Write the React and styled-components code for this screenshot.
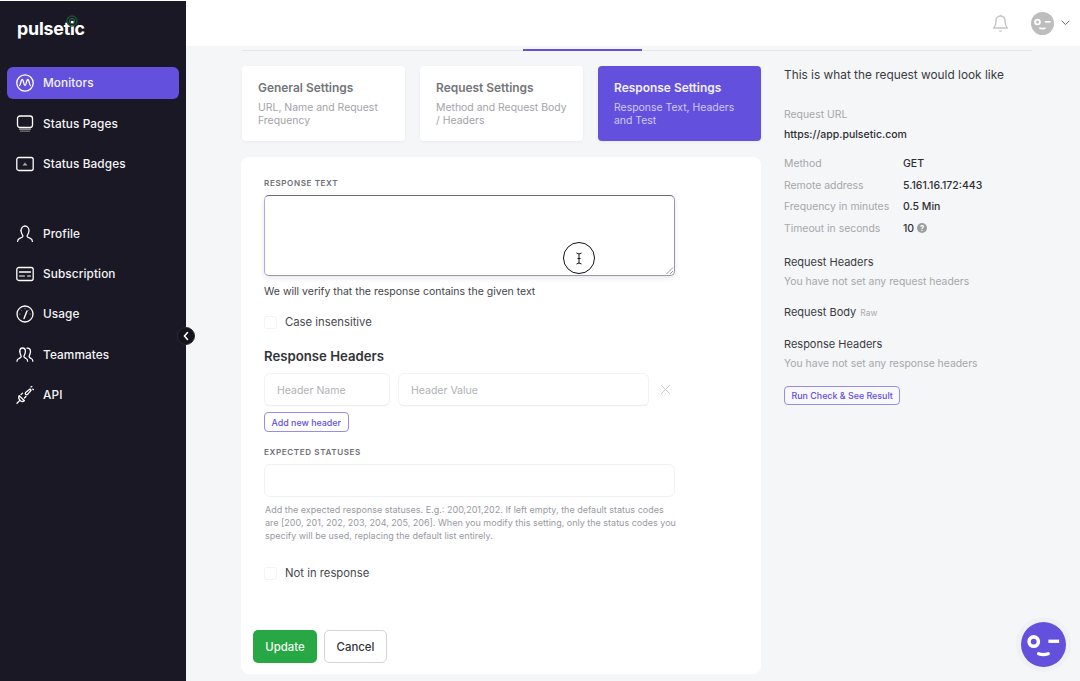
import React from "react";
import styled, { createGlobalStyle } from "styled-components";

const Global = createGlobalStyle`
  html, body { margin: 0; padding: 0; height: 100%; background: #f5f6f8; }
  body { font-family: Inter, "Liberation Sans", sans-serif; -webkit-font-smoothing: antialiased; }
  * { box-sizing: border-box; }
`;

const Shell = styled.div`
  display: flex; width: 1080px; height: 681px; overflow: hidden; position: relative; background: #f5f6f8;
`;
const Sidebar = styled.aside`
  width: 186px; flex: none; background: #1a1824; position: relative; padding: 1px 7px 0; border-top: 1px solid #fff;
`;
const Logo = styled.div`
  position: relative; width: fit-content; margin: 16px 0 0 10px; height: 22px;
  color: #fff; font-size: 17.8px; font-weight: 700; line-height: 22px; letter-spacing: -0.2px;
`;
const LogoDot = styled.svg`
  position: absolute; left: 49px; top: -3px; width: 12px; height: 12px;
`;
const NavGroup = styled.nav`
  display: flex; flex-direction: column; gap: 8px; margin-top: ${p => p.$top}px;
`;
const NavItem = styled.div`
  display: flex; align-items: center; gap: 9px; height: 32.3px; padding-left: 9px; padding-top: 0.6px; border-radius: 6px;
  background: ${p => (p.$active ? "#6350dc" : "transparent")};
  color: #f4f4f6; font-size: 11.8px; font-weight: 500; letter-spacing: 0.1px;
  svg { width: 18px; height: 18px; flex: none; }
`;
const Collapse = styled.button`
  position: absolute; left: 177px; top: 326px; width: 18px; height: 18px; padding: 0; border: 1px solid #2b2937;
  border-radius: 50%; background: #14131b; display: flex; align-items: center; justify-content: center;
`;
const Main = styled.div`
  flex: 1; display: flex; flex-direction: column; min-width: 0;
`;
const Topbar = styled.header`
  height: 46px; flex: none; background: #fff; display: flex; align-items: center; justify-content: flex-end;
  gap: 13px; padding: 0 10px 0 0;
`;
const Avatar = styled.svg`
  width: 23px; height: 23px;
`;
const UserBox = styled.div`
  display: flex; align-items: center; gap: 7px; margin-left: 9px;
`;
const Content = styled.div`
  flex: 1; padding: 0 48px 0 56px; min-height: 0;
`;
const StepLine = styled.div`
  height: 5px; border-bottom: 1px solid #e4e6ec; position: relative;
`;
const StepMark = styled.div`
  position: absolute; left: 281px; top: 3px; width: 119px; height: 2px; background: #6350dc;
`;
const Columns = styled.div`
  display: flex; gap: 23px; margin-top: 15px;
`;
const Left = styled.div`
  width: 519px; flex: none;
`;
const Tabs = styled.div`
  display: grid; grid-template-columns: repeat(3, 163px); gap: 15px;
`;
const Tab = styled.div`
  height: 75px; border-radius: 4px; padding: 14px 15px 0 16px;
  background: ${p => (p.$active ? "#6350dc" : "#fff")};
  box-shadow: 0 1px 3px rgba(30, 30, 60, 0.06);
`;
const TabTitle = styled.div`
  font-size: 11.95px; font-weight: 600; line-height: 15px; margin-bottom: 6px;
  color: ${p => (p.$active ? "#f2f0ff" : "#74757a")};
`;
const TabText = styled.div`
  font-size: 10.45px; line-height: 13px;
  color: ${p => (p.$active ? "#cfc8f7" : "#a3a4a8")};
`;
const Card = styled.section`
  position: relative; margin: 16px 0 0 -1px; width: 520px; height: 517px; background: #fff; border-radius: 8px; padding: 21px 12px 0 23px;
`;
const FieldLabel = styled.div`
  font-size: 8.1px; font-weight: 600; letter-spacing: 0.6px; color: #6f7076; line-height: 10px;
  margin-top: ${p => p.$top || 0}px;
`;
const TextArea = styled.div`
  position: relative; width: 411px; height: 81px; margin-top: 7px;
  border: 1px solid #9a98a8; border-top-color: #6b6b70; border-left-color: #b1a9ee;
  border-radius: 5px; box-shadow: 0 2px 5px rgba(50, 50, 80, 0.12); background: #fff;
`;
const Resize = styled.svg`
  position: absolute; right: 0; bottom: 0; width: 9px; height: 9px;
`;
const Cursor = styled.div`
  position: absolute; left: 322px; top: 85px; width: 32px; height: 32px; border: 1.2px solid #111; border-radius: 50%;
  display: flex; align-items: center; justify-content: center; background: #fff;
`;
const Verify = styled.p`
  margin: 9px 0 0; font-size: 10.5px; line-height: 13px; color: #44454a;
`;
const CheckRow = styled.label`
  display: flex; align-items: center; gap: 8px; margin-top: ${p => p.$top}px; color: #48494e; font-size: 11.3px; line-height: 14px;
`;
const Check = styled.span`
  width: 13px; height: 13px; border-radius: 3px; border: 1px solid #f3f3f5; background: #fff; flex: none;
`;
const SectionTitle = styled.h3`
  margin: 19px 0 0; font-size: 13.2px; font-weight: 600; line-height: 16px; color: #333438;
`;
const HeaderRow = styled.div`
  display: flex; align-items: center; gap: 8px; margin-top: 9px;
`;
const Input = styled.div`
  width: ${p => p.$w}px; height: 33px; border: 1px solid #f1f2f4; border-bottom-color: #eceef0; border-radius: 6px; background: #fff;
  padding: 1px 0 0 12px; display: flex; align-items: center; font-size: 10.5px; color: #b0b1b5; box-shadow: 0 1px 1px rgba(0, 0, 0, 0.02);
`;
const Close = styled.svg`
  width: 11px; height: 11px; margin-left: 3px;
`;
const OutlineBtn = styled.button`
  display: block; height: ${p => (p.$tint ? 19 : 20)}px; padding: 0 6.5px; border: 1px solid #9a8de8; border-radius: 4px;
  background: ${p => (p.$tint ? "#f8f8fc" : "#fff")};
  color: #6350dc; font-family: inherit; font-size: 8.9px; font-weight: 500; margin-top: ${p => p.$top}px;
`;
const Statuses = styled.div`
  width: 411px; height: 33px; margin-top: 7px; border: 1px solid #f0f1f3; border-radius: 6px; background: #fff;
`;
const Hint = styled.p`
  margin: 7px 0 0 1px; width: 414px; font-size: 9px; line-height: 12.8px; color: #999a9f;
`;
const Actions = styled.div`
  position: absolute; left: 12px; bottom: 11px; display: flex; gap: 7px;
`;
const Update = styled.button`
  width: 64px; height: 33px; border: 0; border-radius: 5px; background: #28a745; color: #f2fbf4; font-family: inherit; font-size: 11.4px; font-weight: 500;
`;
const Cancel = styled.button`
  width: 63px; height: 33px; border: 1px solid #d2d4d8; border-radius: 5px; background: #fff; color: #333438; font-family: inherit; font-size: 11.4px; font-weight: 500;
`;
const Side = styled.div`
  flex: 1; min-width: 0; color: #333438; padding-top: 1px;
`;
const SideTitle = styled.div`
  font-size: 11.85px; line-height: 16px; color: #3a3b40;
`;
const MutedLabel = styled.div`
  font-size: 10.4px; line-height: 13px; color: #a6a7ab; margin-top: ${p => p.$top || 0}px;
`;
const UrlText = styled.div`
  font-size: 10.5px; font-weight: 500; line-height: 13px; color: #2e2f33; margin-top: 7px;
`;
const Specs = styled.div`
  display: grid; grid-template-columns: 119px 1fr; row-gap: 8.4px; margin-top: 16.4px; align-items: center;
`;
const SpecValue = styled.div`
  font-size: 10.5px; font-weight: 500; line-height: 13px; color: #2e2f33; display: flex; align-items: center; gap: 3px;
`;
const SideHead = styled.div`
  font-size: 11px; line-height: 14px; color: #3a3b40; margin-top: ${p => p.$top}px;
`;
const Raw = styled.span`
  font-size: 8.4px; color: #aaabaf; margin-left: 1px;
`;
const Help = styled.span`
  width: 10px; height: 10px; border-radius: 50%; background: #9c9da1; color: #fff; font-size: 7.5px; font-weight: 700;
  display: inline-flex; align-items: center; justify-content: center;
`;
const Chat = styled.div`
  position: absolute; left: 1021px; top: 622px; width: 45px; height: 45px; border-radius: 50%; background: #6350dc;
  box-shadow: 0 0 0 5px rgba(225, 228, 235, 0.25);
`;

const stroke = { fill: "none", stroke: "#fff", strokeWidth: 1.3, strokeLinecap: "round", strokeLinejoin: "round" };

const nav1 = [
  ["Monitors", <svg viewBox="0 0 18 18" {...stroke}><circle cx="9" cy="9" r="8.2" /><path d="M3.5 11.5c1.2 0 1.2-6 2.7-6s1.4 6 2.8 6 1.3-6 2.8-6 1.4 6 2.7 6" /></svg>, true],
  ["Status Pages", <svg viewBox="0 0 18 18" {...stroke}><rect x="1.5" y="1" width="15" height="11.5" rx="2.5" /><path d="M3.5 14.2h11" stroke="#aaa" strokeWidth="1.2" /><path d="M4.5 16.2h9" stroke="#777" strokeWidth="1.2" /></svg>],
  ["Status Badges", <svg viewBox="0 0 18 18" {...stroke}><rect x="0.8" y="2.5" width="16.4" height="13" rx="2" /><path d="M6.5 10.5 9 7.5l2.5 3z" fill="#aaa" stroke="none" /></svg>],
];
const nav2 = [
  ["Profile", <svg viewBox="0 0 18 18" {...stroke}><path d="M5 5.6C5 3 6.8 1 9 1s4 2 4 4.6S11.2 10.5 11 11c0 1.2 2 1.8 3.4 2.4 1.2.5 2 1.2 2 3" /><path d="M5 5.6C5 8 6.8 10.5 7 11c0 1.2-2 1.8-3.4 2.4-1.2.5-2 1.2-2 3" /></svg>],
  ["Subscription", <svg viewBox="0 0 18 18" {...stroke}><rect x="0.8" y="2.5" width="16.4" height="13" rx="2" /><path d="M3.5 7h11" /><path d="M3.5 11h5M11.5 11h3" strokeWidth="1.1" /></svg>],
  ["Usage", <svg viewBox="0 0 18 18" {...stroke}><circle cx="9" cy="9" r="8" /><path d="M8 13.5 11 6" strokeWidth="1.4" /><path d="M3.4 9h.6M14 9h.6M5 5l.4.4M9 3.2v.6M13 5l-.4.4" strokeWidth="0.8" stroke="#999" /></svg>],
  ["Teammates", <svg viewBox="0 0 18 18" {...stroke}><path d="M3.8 5.5C3.8 3.3 5 2 6.6 2s2.8 1.3 2.8 3.5-1.4 4-1.5 5c0 1 1.2 1.5 2.2 2 1 .4 1.5 1 1.5 2.7" /><path d="M3.8 5.5c0 2 1.3 4 1.4 5 0 1-1.2 1.5-2.2 2-1 .4-2 1-2 2.7" /><path d="M11 2.2c2-.5 3.5 1 3.5 3.3s-1.3 4-1.4 5c0 1 1.2 1.5 2.1 2 1 .4 1.6 1 1.6 2.7" /></svg>],
  ["API", <svg viewBox="0 0 18 18" {...stroke}><path d="M1 17.2 3.6 14.6" /><path d="M3.2 9.6 8.4 14.8c-1.6 1-3.2.8-4.2-.2S2.3 11.2 3.2 9.6z" /><path d="M5 8.6l1.5-1.5M8.4 12l1.5-1.5" /><path d="M9.6 6.6 14 3l1.2 1.2-3.6 4.2c-1 .5-1.8.2-2.1-.3s0-1.4.1-1.5z" /><path d="M15 .8l.8-.2M17.4 3.6l-.6-.4" /></svg>],
];

const Tag = () => (
  <>
    <circle cx="13" cy="20" r="4.8" fill="none" stroke="currentColor" strokeWidth="3.6" />
    <rect x="28" y="18" width="11" height="3.4" fill="currentColor" />
    <path d="M18 32.5c2.8 1 7 1 9.8 0" fill="none" stroke="currentColor" strokeWidth="3.4" strokeLinecap="round" />
  </>
);

export default function App() {
  return (
    <>
      <Global />
      <Shell>
        <Sidebar>
          <Logo>
            pulsetic
            <LogoDot viewBox="0 0 12 12"><circle cx="6" cy="6" r="5" fill="none" stroke="#1c5039" strokeWidth="1.3" /><circle cx="6" cy="6" r="2.6" fill="none" stroke="#26724c" strokeWidth="1" /><circle cx="6" cy="7" r="1.2" fill="#fff" /></LogoDot>
          </Logo>
          <NavGroup $top={27}>
            {nav1.map(([t, i, a]) => <NavItem key={t} $active={a}>{i}{t}</NavItem>)}
          </NavGroup>
          <NavGroup $top={37.5}>
            {nav2.map(([t, i]) => <NavItem key={t}>{i}{t}</NavItem>)}
          </NavGroup>
          <Collapse aria-label="Collapse">
            <svg width="8" height="10" viewBox="0 0 8 10"><path d="M5.5 1.5 2.5 5l3 3.5" fill="none" stroke="#fff" strokeWidth="1.6" strokeLinecap="round" /></svg>
          </Collapse>
        </Sidebar>
        <Main>
          <Topbar>
            <svg width="17" height="19" viewBox="0 0 17 19" fill="none" stroke="#c4c4c4" strokeWidth="1.4" strokeLinejoin="round"><path d="M8.5 2c-3 0-4.6 2.4-4.6 5.3 0 3.5-.7 5.2-2.2 6.7h13.6c-1.5-1.5-2.2-3.2-2.2-6.7C13.1 4.4 11.5 2 8.5 2z" /><path d="M8.5 2V.8" /><path d="M7 16.5c.6 1 2.4 1 3 0" stroke="#cfcfcf" strokeWidth="1.4" /></svg>
            <UserBox>
              <Avatar viewBox="0 0 46 46"><circle cx="23" cy="23" r="23" fill="#bdbdbd" /><g color="#fff"><Tag /></g></Avatar>
              <svg width="9" height="6" viewBox="0 0 9 6" fill="none" stroke="#6a6a6a" strokeWidth="1"><path d="M.7.8 4.5 4.6 8.3.8" /></svg>
            </UserBox>
          </Topbar>
          <Content>
            <StepLine><StepMark /></StepLine>
            <Columns>
              <Left>
                <Tabs>
                  <Tab><TabTitle>General Settings</TabTitle><TabText>URL, Name and Request Frequency</TabText></Tab>
                  <Tab><TabTitle>Request Settings</TabTitle><TabText>Method and Request Body / Headers</TabText></Tab>
                  <Tab $active><TabTitle $active>Response Settings</TabTitle><TabText $active>Response Text, Headers and Test</TabText></Tab>
                </Tabs>
                <Card>
                  <FieldLabel>RESPONSE TEXT</FieldLabel>
                  <TextArea>
                    <Resize viewBox="0 0 9 9" fill="none" stroke="#777" strokeWidth="0.8"><path d="M1.5 8 8 1.5M5 8l3-3" /></Resize>
                  </TextArea>
                  <Cursor>
                    <svg width="8" height="13" viewBox="0 0 8 13" fill="none" stroke="#111" strokeWidth="1"><path d="M1.5 1 4 2l2.5-1M4 2v9M1.5 12 4 11l2.5 1M2.5 6.5h3" /></svg>
                  </Cursor>
                  <Verify>We will verify that the response contains the given text</Verify>
                  <CheckRow $top={17}><Check />Case insensitive</CheckRow>
                  <SectionTitle>Response Headers</SectionTitle>
                  <HeaderRow>
                    <Input $w={126}>Header Name</Input>
                    <Input $w={251}>Header Value</Input>
                    <Close viewBox="0 0 11 11" fill="none" stroke="#c5c6c9" strokeWidth="0.9"><path d="M1 1l9 9M10 1l-9 9" /></Close>
                  </HeaderRow>
                  <OutlineBtn $top={6}>Add new header</OutlineBtn>
                  <FieldLabel $top={15}>EXPECTED STATUSES</FieldLabel>
                  <Statuses />
                  <Hint>Add the expected response statuses. E.g.: 200,201,202. If left empty, the default status codes are [200, 201, 202, 203, 204, 205, 206]. When you modify this setting, only the status codes you specify will be used, replacing the default list entirely.</Hint>
                  <CheckRow $top={24}><Check />Not in response</CheckRow>
                  <Actions>
                    <Update>Update</Update>
                    <Cancel>Cancel</Cancel>
                  </Actions>
                </Card>
              </Left>
              <Side>
                <SideTitle>This is what the request would look like</SideTitle>
                <MutedLabel $top={25}>Request URL</MutedLabel>
                <UrlText>https://app.pulsetic.com</UrlText>
                <Specs>
                  <MutedLabel>Method</MutedLabel><SpecValue>GET</SpecValue>
                  <MutedLabel>Remote address</MutedLabel><SpecValue>5.161.16.172:443</SpecValue>
                  <MutedLabel>Frequency in minutes</MutedLabel><SpecValue>0.5 Min</SpecValue>
                  <MutedLabel>Timeout in seconds</MutedLabel><SpecValue>10 <Help>?</Help></SpecValue>
                </Specs>
                <SideHead $top={20.5}>Request Headers</SideHead>
                <MutedLabel $top={6}>You have not set any request headers</MutedLabel>
                <SideHead $top={17}>Request Body <Raw>Raw</Raw></SideHead>
                <SideHead $top={17}>Response Headers</SideHead>
                <MutedLabel $top={6}>You have not set any response headers</MutedLabel>
                <OutlineBtn $tint $top={16}>Run Check &amp; See Result</OutlineBtn>
              </Side>
            </Columns>
          </Content>
        </Main>
        <Chat>
          <svg width="45" height="45" viewBox="0 0 46 46" color="#fff"><Tag /></svg>
        </Chat>
      </Shell>
    </>
  );
}
